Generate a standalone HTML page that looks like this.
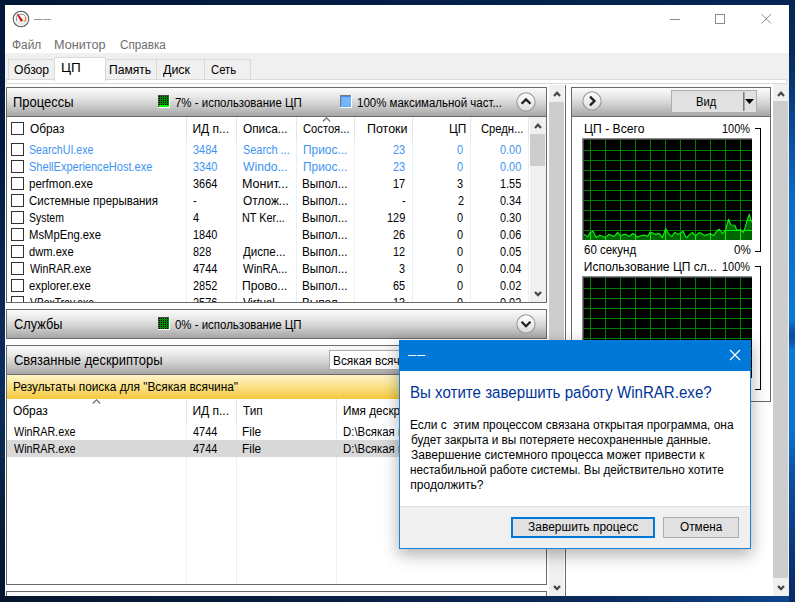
<!DOCTYPE html>
<html lang="ru"><head><meta charset="utf-8"><title>Монитор ресурсов</title>
<style>
*{box-sizing:border-box;margin:0;padding:0}
html,body{width:795px;height:602px;overflow:hidden}
body{position:relative;font-family:"Liberation Sans",sans-serif;font-size:12px;color:#000;
 background:linear-gradient(90deg,#05142e 0,#081e42 40%,#0a2a5c 75%,#0c4690 100%)}
body>*{position:absolute}
.t{position:absolute;white-space:nowrap;line-height:14px;height:14px;font-size:12px;transform-origin:0 0}
.b{color:#3d94f2}
#deskR{left:789px;top:0;width:6px;height:602px;background:linear-gradient(180deg,#052654 0,#072c60 60px,#0b4a98 130px,#0a6cc6 200px,#0a78d4 320px,#0a50a4 332px,#0a50a4 340px,#0a78d4 350px,#0a74d0 430px,#0b4e9e 480px,#0a3378 560px,#0a2a66 602px)}
#deskT{left:0;top:0;width:795px;height:5px;background:linear-gradient(90deg,#021636 0,#03204a 60%,#052654 100%)}
#deskL{left:0;top:5px;width:5px;height:597px;background:linear-gradient(180deg,#03173a 0,#031a40 150px,#0a2a58 300px,#0b2d5c 400px,#08203f 500px,#05142e 597px)}
#win{left:5px;top:5px;width:784px;height:591px;background:#fff}
#tabbg{left:5px;top:53px;width:784px;height:31px;background:#f0f0f0}
#pane{left:6px;top:79px;width:781px;height:5px;background:#fff;border:1px solid #dadada}
.tab{top:59px;height:20px;background:#f0f0f0;border:1px solid #d9d9d9;border-bottom:none}
.tabsel{top:57px;height:24px;background:#fff;border:1px solid #d9d9d9;border-bottom:none}
.menu{color:#6d6d6d}
.hdr{height:30px;border:1px solid #6a6a6a;background:linear-gradient(180deg,#fbfbfb 0,#e9e9e9 30%,#cfcfcf 60%,#a6a6a6 100%)}
.ttl{line-height:16px;height:16px}
.box{border:1px solid #6a6a6a;border-top:none;background:#fff;overflow:hidden}
.cb{position:absolute;width:13px;height:13px;border:1px solid #333;background:#fff}
.sb{background:#f0f0f0}
.thumb{background:#cdcdcd}
.vsep{width:1px;background:#e8f0fa}
</style></head><body>
<div id="deskT"></div>
<div id="deskL"></div>
<div id="deskR"></div>
<div id="win"></div>
<!-- title bar -->
<svg style="left:12px;top:10px" width="18" height="18" viewBox="0 0 18 18">
 <defs><linearGradient id="icg" x1="0" y1="0" x2="0" y2="1"><stop offset="0" stop-color="#ffffff"/><stop offset="1" stop-color="#e6e3dc"/></linearGradient></defs>
 <circle cx="9" cy="9" r="7.7" fill="url(#icg)" stroke="#636468" stroke-width="1.300"/>
 <circle cx="9" cy="9" r="6.5" fill="none" stroke="#ffffff" stroke-width="1"/>
 <path d="M4.500 11.200V7.300C4.600 5.400 6 4.500 7.600 4.400H11.200C12.400 4.600 13 5.500 13.300 6.600" fill="none" stroke="#7d9682" stroke-width=".9"/>
 <path d="M13.600 7.100V10.200L12.500 11.600" fill="none" stroke="#f07d1c" stroke-width="1.200"/>
 <path d="M4.900 4.200L5.900 3.700L11.200 10.400L8.800 11.800Z" fill="#d20f1e"/>
</svg>
<div class="t" style="left:34px;top:11px;color:#999;letter-spacing:1px;font-size:14.400px">––</div>
<svg style="left:660px;top:8px" width="120" height="22" viewBox="0 0 120 22">
 <path d="M10 11.500h10" stroke="#8c8c8c" stroke-width="1" fill="none"/>
 <rect x="55.500" y="6.500" width="9" height="9" stroke="#8c8c8c" stroke-width="1" fill="none"/>
 <path d="M101.500 6l9.500 9.500M111 6l-9.500 9.500" stroke="#8c8c8c" stroke-width="1" fill="none"/>
</svg>
<!-- menu -->
<div class="t menu" style="left:11.9px;top:38px;transform:scaleX(0.991);">Файл</div>
<div class="t menu" style="left:54.2px;top:38px;transform:scaleX(1.055);">Монитор</div>
<div class="t menu" style="left:119.7px;top:38px;transform:scaleX(0.973);">Справка</div>
<!-- tabs -->
<div id="tabbg"></div>
<div id="pane"></div>
<div class="tab" style="left:8px;width:47px"></div>
<div class="tab" style="left:105px;width:52px"></div>
<div class="tab" style="left:156px;width:49px"></div>
<div class="tab" style="left:204px;width:47px"></div>
<div class="tabsel" style="left:54px;width:52px"></div>
<div class="t" style="left:13.7px;top:63px;transform:scaleX(1.012);">Обзор</div>
<div class="t" style="left:61.3px;top:61px;transform:scaleX(1.128);">ЦП</div>
<div class="t" style="left:109.2px;top:63px;transform:scaleX(1.009);">Память</div>
<div class="t" style="left:162.9px;top:63px;transform:scaleX(1.036);">Диск</div>
<div class="t" style="left:210.7px;top:63px;transform:scaleX(0.941);">Сеть</div>
<!-- processes -->
<div class="hdr" style="left:6px;top:87px;width:541px"></div>
<div class="t ttl" style="left:13.0px;top:94px;transform:scaleX(0.925);font-size:14px;">Процессы</div>
<svg style="left:158px;top:95px" width="12" height="13" viewBox="0 0 12 13" shape-rendering="crispEdges"><rect width="12" height="13" fill="#fff"/><rect width="11" height="12" fill="#4a4a4a"/><rect x="1" y="1" width="10" height="11" fill="#008c00"/><path d="M1 1h1v1h-1zM1 3h1v1h-1zM1 5h1v1h-1zM1 7h1v1h-1zM1 9h1v1h-1zM1 11h1v1h-1zM3 1h1v1h-1zM3 3h1v1h-1zM3 5h1v1h-1zM3 7h1v1h-1zM3 9h1v1h-1zM3 11h1v1h-1zM5 1h1v1h-1zM5 3h1v1h-1zM5 5h1v1h-1zM5 7h1v1h-1zM5 9h1v1h-1zM5 11h1v1h-1zM7 1h1v1h-1zM7 3h1v1h-1zM7 5h1v1h-1zM7 7h1v1h-1zM7 9h1v1h-1zM7 11h1v1h-1zM9 1h1v1h-1zM9 3h1v1h-1zM9 5h1v1h-1zM9 7h1v1h-1zM9 9h1v1h-1zM9 11h1v1h-1z" fill="#000"/><rect x="1" y="10" width="10" height="2" fill="#00ff00"/></svg>
<div class="t" style="left:174.7px;top:96px;transform:scaleX(0.955);">7% - использование ЦП</div>
<svg style="left:340px;top:95px" width="12" height="13" viewBox="0 0 12 13" shape-rendering="crispEdges"><rect width="12" height="13" fill="#fff"/><rect width="11" height="12" fill="#7a7a7a"/><rect x="1" y="1" width="10" height="11" fill="#62a8f8"/><rect x="1" y="1" width="10" height="1" fill="#4888f0"/><rect x="2" y="2" width="9" height="9" fill="#74b6fc"/></svg>
<div class="t" style="left:356.9px;top:96px;transform:scaleX(0.956);">100% максимальной част...</div>
<svg style="left:516px;top:92px" width="20" height="20" viewBox="0 0 19 19"><defs><linearGradient id="cg1" x1="0" y1="0" x2="0" y2="1"><stop offset="0" stop-color="#ffffff"/><stop offset="1" stop-color="#dcdcdc"/></linearGradient></defs><circle cx="9.500" cy="9.500" r="8.700" fill="url(#cg1)" stroke="#969696" stroke-width="1"/><path d="M5.300 11.200l4.200-4.200 4.200 4.200" fill="none" stroke="#1e1e1e" stroke-width="2.200"/></svg>
<div class="box" style="left:6px;top:117px;width:541px;height:186px"></div>
<div class="vsep" style="left:186px;top:117px;height:23px;background:#e5e5e5"></div>
<div class="vsep" style="left:186px;top:140px;height:162px"></div>
<div class="vsep" style="left:236px;top:117px;height:23px;background:#e5e5e5"></div>
<div class="vsep" style="left:236px;top:140px;height:162px"></div>
<div class="vsep" style="left:296px;top:117px;height:23px;background:#e5e5e5"></div>
<div class="vsep" style="left:296px;top:140px;height:162px"></div>
<div class="vsep" style="left:354px;top:117px;height:23px;background:#e5e5e5"></div>
<div class="vsep" style="left:354px;top:140px;height:162px"></div>
<div class="vsep" style="left:412px;top:117px;height:23px;background:#e5e5e5"></div>
<div class="vsep" style="left:412px;top:140px;height:162px"></div>
<div class="vsep" style="left:470px;top:117px;height:23px;background:#e5e5e5"></div>
<div class="vsep" style="left:470px;top:140px;height:162px"></div>
<div class="vsep" style="left:528px;top:117px;height:23px;background:#e5e5e5"></div>
<div class="vsep" style="left:528px;top:140px;height:162px"></div>
<svg style="left:322px;top:117px" width="9" height="5" viewBox="0 0 9 5"><path d="M.800 4.500l3.700-3.700 3.700 3.700" fill="none" stroke="#6a6a6a" stroke-width="1.100"/></svg>
<div class="cb" style="left:11px;top:122px"></div>
<div class="t" style="left:30.1px;top:122px;transform:scaleX(0.988);">Образ</div>
<div class="t" style="left:192.4px;top:122px;">ИД п...</div>
<div class="t" style="left:242.8px;top:122px;transform:scaleX(0.986);">Описа...</div>
<div class="t" style="left:302.8px;top:122px;transform:scaleX(0.932);">Состоя...</div>
<div class="t" style="left:366.9px;top:122px;transform:scaleX(1.038);">Потоки</div>
<div class="t" style="left:448.6px;top:122px;transform:scaleX(0.987);">ЦП</div>
<div class="t" style="left:481.0px;top:122px;transform:scaleX(0.934);">Средн...</div>
<div style="left:7px;top:140px;width:522px;height:162px;overflow:hidden">
<div class="cb" style="left:4px;top:3px"></div>
<div class="t b" style="left:22.3px;top:3px;transform:scaleX(0.887);">SearchUI.exe</div>
<div class="t b" style="left:186.0px;top:3px;transform:scaleX(0.910);">3484</div>
<div class="t b" style="left:235.8px;top:3px;transform:scaleX(0.909);">Search ...</div>
<div class="t b" style="left:295.5px;top:3px;transform:scaleX(0.992);">Приос...</div>
<div class="t b" style="left:386.4px;top:3px;transform:scaleX(0.910);">23</div>
<div class="t b" style="left:450.4px;top:3px;transform:scaleX(0.910);">0</div>
<div class="t b" style="left:493.2px;top:3px;transform:scaleX(0.910);">0.00</div>
<div class="cb" style="left:4px;top:20px"></div>
<div class="t b" style="left:22.2px;top:20px;transform:scaleX(0.920);">ShellExperienceHost.exe</div>
<div class="t b" style="left:186.0px;top:20px;transform:scaleX(0.910);">3340</div>
<div class="t b" style="left:236.2px;top:20px;transform:scaleX(1.012);">Windo...</div>
<div class="t b" style="left:295.5px;top:20px;transform:scaleX(0.992);">Приос...</div>
<div class="t b" style="left:386.4px;top:20px;transform:scaleX(0.910);">23</div>
<div class="t b" style="left:450.4px;top:20px;transform:scaleX(0.910);">0</div>
<div class="t b" style="left:493.2px;top:20px;transform:scaleX(0.910);">0.00</div>
<div class="cb" style="left:4px;top:37px"></div>
<div class="t" style="left:22.0px;top:37px;transform:scaleX(0.958);">perfmon.exe</div>
<div class="t" style="left:186.0px;top:37px;transform:scaleX(0.910);">3664</div>
<div class="t" style="left:235.3px;top:37px;transform:scaleX(1.045);">Монит...</div>
<div class="t" style="left:295.4px;top:37px;transform:scaleX(0.976);">Выпол...</div>
<div class="t" style="left:386.4px;top:37px;transform:scaleX(0.910);">17</div>
<div class="t" style="left:450.4px;top:37px;transform:scaleX(0.910);">3</div>
<div class="t" style="left:493.2px;top:37px;transform:scaleX(0.910);">1.55</div>
<div class="cb" style="left:4px;top:54px"></div>
<div class="t" style="left:22.2px;top:54px;transform:scaleX(0.957);">Системные прерывания</div>
<div class="t" style="left:185.9px;top:54px;transform:scaleX(0.910);">-</div>
<div class="t" style="left:235.8px;top:54px;transform:scaleX(0.988);">Отлож...</div>
<div class="t" style="left:295.4px;top:54px;transform:scaleX(0.976);">Выпол...</div>
<div class="t" style="left:394.9px;top:54px;transform:scaleX(0.910);">-</div>
<div class="t" style="left:450.5px;top:54px;transform:scaleX(0.910);">2</div>
<div class="t" style="left:493.1px;top:54px;transform:scaleX(0.910);">0.34</div>
<div class="cb" style="left:4px;top:71px"></div>
<div class="t" style="left:22.3px;top:71px;transform:scaleX(0.871);">System</div>
<div class="t" style="left:186.1px;top:71px;transform:scaleX(0.910);">4</div>
<div class="t" style="left:235.4px;top:71px;transform:scaleX(0.906);">NT Ker...</div>
<div class="t" style="left:295.4px;top:71px;transform:scaleX(0.976);">Выпол...</div>
<div class="t" style="left:380.3px;top:71px;transform:scaleX(0.910);">129</div>
<div class="t" style="left:450.4px;top:71px;transform:scaleX(0.910);">0</div>
<div class="t" style="left:493.2px;top:71px;transform:scaleX(0.910);">0.30</div>
<div class="cb" style="left:4px;top:88px"></div>
<div class="t" style="left:21.8px;top:88px;transform:scaleX(0.939);">MsMpEng.exe</div>
<div class="t" style="left:185.6px;top:88px;transform:scaleX(0.910);">1840</div>
<div class="t" style="left:295.4px;top:88px;transform:scaleX(0.976);">Выпол...</div>
<div class="t" style="left:386.4px;top:88px;transform:scaleX(0.910);">26</div>
<div class="t" style="left:450.4px;top:88px;transform:scaleX(0.910);">0</div>
<div class="t" style="left:493.2px;top:88px;transform:scaleX(0.910);">0.06</div>
<div class="cb" style="left:4px;top:105px"></div>
<div class="t" style="left:22.3px;top:105px;transform:scaleX(0.929);">dwm.exe</div>
<div class="t" style="left:185.9px;top:105px;transform:scaleX(0.910);">828</div>
<div class="t" style="left:236.2px;top:105px;transform:scaleX(0.963);">Диспе...</div>
<div class="t" style="left:295.4px;top:105px;transform:scaleX(0.976);">Выпол...</div>
<div class="t" style="left:386.4px;top:105px;transform:scaleX(0.910);">12</div>
<div class="t" style="left:450.4px;top:105px;transform:scaleX(0.910);">0</div>
<div class="t" style="left:493.2px;top:105px;transform:scaleX(0.910);">0.05</div>
<div class="cb" style="left:4px;top:122px"></div>
<div class="t" style="left:22.7px;top:122px;transform:scaleX(0.892);">WinRAR.exe</div>
<div class="t" style="left:186.1px;top:122px;transform:scaleX(0.910);">4744</div>
<div class="t" style="left:236.3px;top:122px;transform:scaleX(0.939);">WinRA...</div>
<div class="t" style="left:295.4px;top:122px;transform:scaleX(0.976);">Выпол...</div>
<div class="t" style="left:392.4px;top:122px;transform:scaleX(0.910);">3</div>
<div class="t" style="left:450.4px;top:122px;transform:scaleX(0.910);">0</div>
<div class="t" style="left:493.1px;top:122px;transform:scaleX(0.910);">0.04</div>
<div class="cb" style="left:4px;top:139px"></div>
<div class="t" style="left:22.3px;top:139px;transform:scaleX(0.944);">explorer.exe</div>
<div class="t" style="left:185.9px;top:139px;transform:scaleX(0.910);">2852</div>
<div class="t" style="left:235.3px;top:139px;transform:scaleX(1.013);">Прово...</div>
<div class="t" style="left:295.4px;top:139px;transform:scaleX(0.976);">Выпол...</div>
<div class="t" style="left:386.4px;top:139px;transform:scaleX(0.910);">65</div>
<div class="t" style="left:450.4px;top:139px;transform:scaleX(0.910);">0</div>
<div class="t" style="left:493.3px;top:139px;transform:scaleX(0.910);">0.02</div>
<div class="cb" style="left:4px;top:156px"></div>
<div class="t" style="left:22.7px;top:156px;transform:scaleX(0.865);">VBoxTray.exe</div>
<div class="t" style="left:185.9px;top:156px;transform:scaleX(0.910);">2576</div>
<div class="t" style="left:236.3px;top:156px;transform:scaleX(0.943);">Virtual...</div>
<div class="t" style="left:295.4px;top:156px;transform:scaleX(0.976);">Выпол...</div>
<div class="t" style="left:386.4px;top:156px;transform:scaleX(0.910);">13</div>
<div class="t" style="left:450.4px;top:156px;transform:scaleX(0.910);">0</div>
<div class="t" style="left:493.3px;top:156px;transform:scaleX(0.910);">0.02</div>
</div>
<div class="sb" style="left:530px;top:117px;width:16px;height:185px"></div>
<div class="thumb" style="left:530px;top:134px;width:15px;height:32px"></div>
<svg style="left:533px;top:122px" width="10" height="8" viewBox="0 0 10 8"><path d="M2 5.900L5 2.700L8 5.900" fill="none" stroke="#484848" stroke-width="2.200"/></svg>
<svg style="left:533px;top:290px" width="10" height="8" viewBox="0 0 10 8"><path d="M2 1.900L5 5.100L8 1.900" fill="none" stroke="#484848" stroke-width="2.200"/></svg>
<!-- services -->
<div class="hdr" style="left:6px;top:309px;width:541px"></div>
<div class="t ttl" style="left:13.5px;top:316px;transform:scaleX(0.912);font-size:14px;">Службы</div>
<svg style="left:158px;top:317px" width="12" height="13" viewBox="0 0 12 13" shape-rendering="crispEdges"><rect width="12" height="13" fill="#fff"/><rect width="11" height="12" fill="#4a4a4a"/><rect x="1" y="1" width="10" height="11" fill="#008c00"/><path d="M1 1h1v1h-1zM1 3h1v1h-1zM1 5h1v1h-1zM1 7h1v1h-1zM1 9h1v1h-1zM1 11h1v1h-1zM3 1h1v1h-1zM3 3h1v1h-1zM3 5h1v1h-1zM3 7h1v1h-1zM3 9h1v1h-1zM3 11h1v1h-1zM5 1h1v1h-1zM5 3h1v1h-1zM5 5h1v1h-1zM5 7h1v1h-1zM5 9h1v1h-1zM5 11h1v1h-1zM7 1h1v1h-1zM7 3h1v1h-1zM7 5h1v1h-1zM7 7h1v1h-1zM7 9h1v1h-1zM7 11h1v1h-1zM9 1h1v1h-1zM9 3h1v1h-1zM9 5h1v1h-1zM9 7h1v1h-1zM9 9h1v1h-1zM9 11h1v1h-1z" fill="#000"/></svg>
<div class="t" style="left:174.9px;top:318px;transform:scaleX(0.954);">0% - использование ЦП</div>
<svg style="left:516px;top:314px" width="20" height="20" viewBox="0 0 19 19"><defs><linearGradient id="cg2" x1="0" y1="0" x2="0" y2="1"><stop offset="0" stop-color="#ffffff"/><stop offset="1" stop-color="#dcdcdc"/></linearGradient></defs><circle cx="9.500" cy="9.500" r="8.700" fill="url(#cg2)" stroke="#969696" stroke-width="1"/><path d="M5.300 7.400l4.200 4.200 4.200-4.200" fill="none" stroke="#1e1e1e" stroke-width="2.200"/></svg>
<!-- handles -->
<div class="hdr" style="left:6px;top:345px;width:541px"></div>
<div class="t ttl" style="left:13.5px;top:352px;transform:scaleX(0.925);font-size:14px;">Связанные дескрипторы</div>
<div style="left:329px;top:350px;width:190px;height:20px;background:#fff;border:1px solid #ababab"></div>
<div class="t" style="left:332.6px;top:354px;transform:scaleX(0.988);">Всякая всячина</div>
<div style="left:6px;top:375px;width:541px;height:24px;border-left:1px solid #6a6a6a;border-right:1px solid #6a6a6a;background:linear-gradient(180deg,#fdf3c8 0,#fbe48e 45%,#f5c83c 100%)"></div>
<div class="t" style="left:12.5px;top:380px;transform:scaleX(0.988);">Результаты поиска для "Всякая всячина"</div>
<div class="box" style="left:6px;top:399px;width:541px;height:186px"></div>
<div class="vsep" style="left:186px;top:399px;height:24px;background:#e5e5e5"></div>
<div class="vsep" style="left:186px;top:423px;height:161px"></div>
<div class="vsep" style="left:236px;top:399px;height:24px;background:#e5e5e5"></div>
<div class="vsep" style="left:236px;top:423px;height:161px"></div>
<div class="vsep" style="left:336px;top:399px;height:24px;background:#e5e5e5"></div>
<div class="vsep" style="left:336px;top:423px;height:161px"></div>
<svg style="left:92px;top:399px" width="9" height="5" viewBox="0 0 9 5"><path d="M.800 4.500l3.700-3.700 3.700 3.700" fill="none" stroke="#6a6a6a" stroke-width="1.100"/></svg>
<div class="t" style="left:12.9px;top:404px;">Образ</div>
<div class="t" style="left:192.4px;top:404px;">ИД п...</div>
<div class="t" style="left:242.6px;top:404px;transform:scaleX(0.980);">Тип</div>
<div class="t" style="left:342.6px;top:404px;transform:scaleX(0.980);">Имя дескриптора</div>
<div style="left:7px;top:440px;width:539px;height:17px;background:#d9d9d9"></div>
<div class="t" style="left:13.5px;top:425px;transform:scaleX(0.897);">WinRAR.exe</div>
<div class="t" style="left:193.1px;top:425px;transform:scaleX(0.910);">4744</div>
<div class="t" style="left:241.8px;top:425px;transform:scaleX(0.989);">File</div>
<div class="t" style="left:342.7px;top:425px;transform:scaleX(0.950);">D:\Всякая всячина</div>
<div class="t" style="left:13.5px;top:442px;transform:scaleX(0.897);">WinRAR.exe</div>
<div class="t" style="left:193.1px;top:442px;transform:scaleX(0.910);">4744</div>
<div class="t" style="left:241.8px;top:442px;transform:scaleX(0.989);">File</div>
<div class="t" style="left:342.7px;top:442px;transform:scaleX(0.950);">D:\Всякая всячина</div>
<div style="left:6px;top:591px;width:541px;height:5px;border:1px solid #6a6a6a;border-bottom:none;background:#fafafa"></div>
<div class="sb" style="left:549px;top:85px;width:15px;height:511px"></div>
<div class="thumb" style="left:549px;top:102px;width:15px;height:340px"></div>
<svg style="left:551.5px;top:90px" width="10" height="8" viewBox="0 0 10 8"><path d="M2 5.900L5 2.700L8 5.900" fill="none" stroke="#484848" stroke-width="2.200"/></svg>
<svg style="left:551.5px;top:584px" width="10" height="8" viewBox="0 0 10 8"><path d="M2 1.900L5 5.100L8 1.900" fill="none" stroke="#484848" stroke-width="2.200"/></svg>
<div style="left:565px;top:85px;width:1px;height:511px;background:#6a6a6a"></div>
<!-- right pane -->
<div class="hdr" style="left:571px;top:87px;width:200px"></div>
<div class="box" style="left:571px;top:117px;width:200px;height:285px"></div>
<svg style="left:582px;top:91px" width="20" height="20" viewBox="0 0 19 19"><defs><linearGradient id="cg3" x1="0" y1="0" x2="0" y2="1"><stop offset="0" stop-color="#ffffff"/><stop offset="1" stop-color="#dcdcdc"/></linearGradient></defs><circle cx="9.500" cy="9.500" r="8.700" fill="url(#cg3)" stroke="#969696" stroke-width="1"/><path d="M7.600 5.300l4.200 4.200-4.200 4.200" fill="none" stroke="#1e1e1e" stroke-width="2.200"/></svg>
<div style="left:671px;top:90px;width:86px;height:23px;background:#e1e1e1;border:1px solid #adadad"></div>
<div class="t" style="left:695.6px;top:95px;transform:scaleX(0.937);">Вид</div>
<div style="left:743px;top:92px;width:2px;height:19px;background:#7a7a7a;border-right:1px solid #a8a8a8"></div>
<svg style="left:745px;top:99px" width="9" height="5" viewBox="0 0 9 5"><path d="M0 0h9l-4.500 5z" fill="#000"/></svg>
<div class="t" style="left:583.8px;top:122px;transform:scaleX(1.014);">ЦП - Всего</div>
<div class="t" style="left:722.0px;top:122px;transform:scaleX(0.910);">100%</div>
<div class="t" style="left:583.9px;top:243px;transform:scaleX(0.958);">60 секунд</div>
<div class="t" style="left:733.6px;top:243px;transform:scaleX(0.973);">0%</div>
<div style="left:755px;top:128px;width:6px;height:124px;border:1px solid #000;border-left:none"></div>
<svg style="left:582px;top:138px" width="170" height="102" viewBox="0 0 170 102"><rect width="170" height="102" fill="#000"/><path d="M0 102V0H170" fill="none" stroke="#8a8a8a" stroke-width="3"/><path d="M8.5 1.500V102M23.5 1.500V102M38.5 1.500V102M53.5 1.500V102M68.5 1.500V102M83.5 1.500V102M98.5 1.500V102M113.5 1.500V102M128.5 1.500V102M143.5 1.500V102M158.5 1.500V102M1.500 12.5H170M1.500 22.5H170M1.500 32.5H170M1.500 42.5H170M1.500 52.5H170M1.500 62.5H170M1.500 72.5H170M1.500 82.5H170M1.500 92.5H170" stroke="#008000" stroke-width="1" fill="none"/><clipPath id="fc138"><polygon points="2.2,102 2.2,96.4 5.5,98.7 8.2,94.5 11.0,93.3 14.2,99.6 17.8,97.3 20.6,98.3 23.3,99.6 27.1,96.3 29.7,97.6 32.3,98.3 35.6,94.3 38.4,97.9 41.4,96.4 44.0,96.4 47.4,98.5 50.5,95.5 53.1,96.8 55.4,99.1 58.0,98.0 60.3,97.3 63.3,97.3 65.5,98.5 68.2,94.0 71.2,95.3 73.8,96.4 77.2,95.3 80.5,99.6 83.7,90.4 85.9,94.9 89.7,98.7 92.7,94.3 95.6,96.4 98.4,95.1 101.0,93.3 104.4,99.8 107.8,96.4 110.5,94.5 113.5,97.9 116.5,94.8 118.0,94.8 122.9,97.6 128.2,95.5 131.6,97.6 135.4,92.3 137.5,91.3 140.5,95.7 143.7,91.9 144.8,87.4 146.5,81.3 148.9,87.0 152.7,87.2 155.0,92.3 158.4,91.5 161.4,94.3 163.3,88.9 165.4,81.3 167.4,76.4 168.7,81.3 170.0,84.4 170.0,102"/></clipPath><polygon points="2.2,102 2.2,96.4 5.5,98.7 8.2,94.5 11.0,93.3 14.2,99.6 17.8,97.3 20.6,98.3 23.3,99.6 27.1,96.3 29.7,97.6 32.3,98.3 35.6,94.3 38.4,97.9 41.4,96.4 44.0,96.4 47.4,98.5 50.5,95.5 53.1,96.8 55.4,99.1 58.0,98.0 60.3,97.3 63.3,97.3 65.5,98.5 68.2,94.0 71.2,95.3 73.8,96.4 77.2,95.3 80.5,99.6 83.7,90.4 85.9,94.9 89.7,98.7 92.7,94.3 95.6,96.4 98.4,95.1 101.0,93.3 104.4,99.8 107.8,96.4 110.5,94.5 113.5,97.9 116.5,94.8 118.0,94.8 122.9,97.6 128.2,95.5 131.6,97.6 135.4,92.3 137.5,91.3 140.5,95.7 143.7,91.9 144.8,87.4 146.5,81.3 148.9,87.0 152.7,87.2 155.0,92.3 158.4,91.5 161.4,94.3 163.3,88.9 165.4,81.3 167.4,76.4 168.7,81.3 170.0,84.4 170.0,102" fill="#006400"/><path d="M8.5 1.500V102M23.5 1.500V102M38.5 1.500V102M53.5 1.500V102M68.5 1.500V102M83.5 1.500V102M98.5 1.500V102M113.5 1.500V102M128.5 1.500V102M143.5 1.500V102M158.5 1.500V102M1.500 12.5H170M1.500 22.5H170M1.500 32.5H170M1.500 42.5H170M1.500 52.5H170M1.500 62.5H170M1.500 72.5H170M1.500 82.5H170M1.500 92.5H170" stroke="#0cf00c" stroke-width="1" fill="none" clip-path="url(#fc138)"/><polyline points="2.2,96.4 5.5,98.7 8.2,94.5 11.0,93.3 14.2,99.6 17.8,97.3 20.6,98.3 23.3,99.6 27.1,96.3 29.7,97.6 32.3,98.3 35.6,94.3 38.4,97.9 41.4,96.4 44.0,96.4 47.4,98.5 50.5,95.5 53.1,96.8 55.4,99.1 58.0,98.0 60.3,97.3 63.3,97.3 65.5,98.5 68.2,94.0 71.2,95.3 73.8,96.4 77.2,95.3 80.5,99.6 83.7,90.4 85.9,94.9 89.7,98.7 92.7,94.3 95.6,96.4 98.4,95.1 101.0,93.3 104.4,99.8 107.8,96.4 110.5,94.5 113.5,97.9 116.5,94.8 118.0,94.8 122.9,97.6 128.2,95.5 131.6,97.6 135.4,92.3 137.5,91.3 140.5,95.7 143.7,91.9 144.8,87.4 146.5,81.3 148.9,87.0 152.7,87.2 155.0,92.3 158.4,91.5 161.4,94.3 163.3,88.9 165.4,81.3 167.4,76.4 168.7,81.3 170.0,84.4" fill="none" stroke="#10f010" stroke-width="1.150" stroke-linejoin="round"/></svg>
<div class="t" style="left:583.8px;top:260px;">Использование ЦП сл...</div>
<div class="t" style="left:722.0px;top:260px;transform:scaleX(0.910);">100%</div>
<div class="t" style="left:583.9px;top:381px;transform:scaleX(0.958);">60 секунд</div>
<div class="t" style="left:733.6px;top:381px;transform:scaleX(0.973);">0%</div>
<div style="left:755px;top:266px;width:6px;height:124px;border:1px solid #000;border-left:none"></div>
<svg style="left:582px;top:276px" width="170" height="102" viewBox="0 0 170 102"><rect width="170" height="102" fill="#000"/><path d="M0 102V0H170" fill="none" stroke="#8a8a8a" stroke-width="3"/><path d="M8.5 1.500V102M23.5 1.500V102M38.5 1.500V102M53.5 1.500V102M68.5 1.500V102M83.5 1.500V102M98.5 1.500V102M113.5 1.500V102M128.5 1.500V102M143.5 1.500V102M158.5 1.500V102M1.500 12.5H170M1.500 22.5H170M1.500 32.5H170M1.500 42.5H170M1.500 52.5H170M1.500 62.5H170M1.500 72.5H170M1.500 82.5H170M1.500 92.5H170" stroke="#008000" stroke-width="1" fill="none"/></svg>
<div class="sb" style="left:773px;top:84px;width:16px;height:512px"></div>
<div class="thumb" style="left:773px;top:101px;width:15px;height:477px"></div>
<svg style="left:776px;top:90px" width="10" height="8" viewBox="0 0 10 8"><path d="M2 5.900L5 2.700L8 5.900" fill="none" stroke="#484848" stroke-width="2.200"/></svg>
<svg style="left:776px;top:584px" width="10" height="8" viewBox="0 0 10 8"><path d="M2 1.900L5 5.100L8 1.900" fill="none" stroke="#484848" stroke-width="2.200"/></svg>
<!-- dialog -->
<div style="left:399px;top:340px;width:352px;height:209px;background:#fff;border:1px solid #1883d7;box-shadow:0 5px 15px 1px rgba(0,0,0,.30)"></div>
<div style="left:399px;top:340px;width:352px;height:31px;background:#0078d7"></div>
<div class="t" style="left:408px;top:347px;color:#fff;letter-spacing:1px;font-size:14.400px">––</div>
<svg style="left:729px;top:349px" width="12" height="12" viewBox="0 0 12 12"><path d="M1 1l10 10M11 1L1 11" stroke="#fff" stroke-width="1.200" fill="none"/></svg>
<div class="t" style="left:410.0px;top:383px;transform:scaleX(0.943);font-size:16px;line-height:20px;height:20px;color:#003399">Вы хотите завершить работу WinRAR.exe?</div>
<div class="t" style="left:410.2px;top:418px;transform:scaleX(0.992);">Если с&nbsp; этим процессом связана открытая программа, она</div>
<div class="t" style="left:410.5px;top:433px;transform:scaleX(0.979);">будет закрыта и вы потеряете несохраненные данные.</div>
<div class="t" style="left:410.8px;top:448px;transform:scaleX(1.004);">Завершение системного процесса может привести к</div>
<div class="t" style="left:410.4px;top:463px;transform:scaleX(0.978);">нестабильной работе системы. Вы действительно хотите</div>
<div class="t" style="left:410.3px;top:478px;">продолжить?</div>
<div style="left:400px;top:506px;width:350px;height:42px;background:#f0f0f0;border-top:1px solid #dfdfdf"></div>
<div style="left:511px;top:517px;width:144px;height:21px;background:#e1e1e1;border:2px solid #0078d7"></div>
<div class="t" style="left:528.0px;top:520px;">Завершить процесс</div>
<div style="left:663px;top:517px;width:76px;height:21px;background:#e1e1e1;border:1px solid #adadad"></div>
<div class="t" style="left:679.9px;top:520px;transform:scaleX(0.981);">Отмена</div>
</body></html>
